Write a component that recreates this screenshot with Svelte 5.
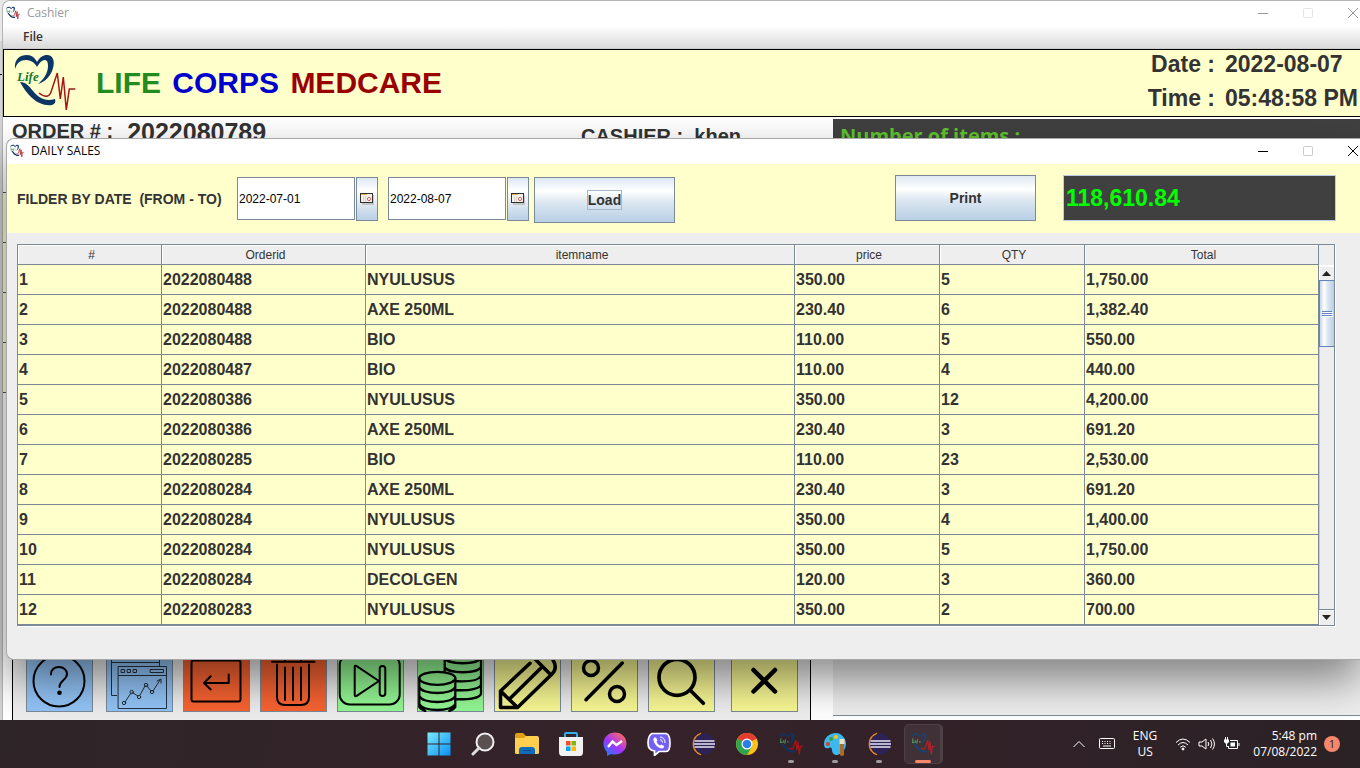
<script>
  const columns = [
    { name: '#', width: 144 },
    { name: 'Orderid', width: 204 },
    { name: 'itemname', width: 429 },
    { name: 'price', width: 145 },
    { name: 'QTY', width: 145 },
    { name: 'Total', width: 234 }
  ];

  const rows = [
    ['1', '2022080488', 'NYULUSUS', '350.00', '5', '1,750.00'],
    ['2', '2022080488', 'AXE 250ML', '230.40', '6', '1,382.40'],
    ['3', '2022080488', 'BIO', '110.00', '5', '550.00'],
    ['4', '2022080487', 'BIO', '110.00', '4', '440.00'],
    ['5', '2022080386', 'NYULUSUS', '350.00', '12', '4,200.00'],
    ['6', '2022080386', 'AXE 250ML', '230.40', '3', '691.20'],
    ['7', '2022080285', 'BIO', '110.00', '23', '2,530.00'],
    ['8', '2022080284', 'AXE 250ML', '230.40', '3', '691.20'],
    ['9', '2022080284', 'NYULUSUS', '350.00', '4', '1,400.00'],
    ['10', '2022080284', 'NYULUSUS', '350.00', '5', '1,750.00'],
    ['11', '2022080284', 'DECOLGEN', '120.00', '3', '360.00'],
    ['12', '2022080283', 'NYULUSUS', '350.00', '2', '700.00']
  ];

  let from = $state('2022-07-01');
  let to = $state('2022-08-07');
</script>

{#snippet logo(size, lettering)}
  <svg class="logo" width={size} height={size} viewBox="0 0 62 60" aria-hidden="true">
    <path fill="#0b3564" d="M1 16C0 6 6 2 13 2c5 0 8 3 10 7 3-5 6-7 10-7 6 0 8 6 6 13-2 8-8 14-15 16 6-5 10-11 10-18 0-4-1-6-3-6-4 0-6 4-8 7-2-4-6-7-11-7-6 0-9 3-11 9z" />
    <path fill="#0b3564" d="M6 29c6 0 9 4 13 9 6 7 12 11 22 8 1 3 0 5-3 6-7 1-15-2-21-8-4-4-7-8-11-15z" />
    <path fill="none" stroke="#a8141b" stroke-width={lettering ? 1.5 : 3} d="M25 40c5 4 10 5 12-1l6.300-19 3 26 3-22 3 33 3-21h6" />
    {#if lettering}
      <text x="3" y="28" font-family="Liberation Serif, serif" font-style="italic" font-weight="bold" font-size="13" fill="#147a35">Life</text>
    {:else}
      <path fill="none" stroke="#3f8a55" stroke-width="3" d="M5 15l-1 11 6-1M12 20v7M17 18l-2 11M21 24l4 1" />
    {/if}
  </svg>
{/snippet}

{#snippet caption(title)}
  <header class="caption">
    {@render logo(14, false)}
    <span class="caption-title">{title}</span>
    <span class="caption-controls">
      <button aria-label="Minimize"><svg width="12" height="12"><path d="M1 6.500h10" /></svg></button>
      <button aria-label="Maximize" disabled><svg width="12" height="12"><rect x="1.500" y="1.500" width="9" height="9" rx="1" /></svg></button>
      <button aria-label="Close"><svg width="12" height="12"><path d="M1 1l10 10M11 1L1 11" /></svg></button>
    </span>
  </header>
{/snippet}

{#snippet calendar()}
  <svg width="14" height="12" viewBox="0 0 14 12" aria-hidden="true">
    <rect x="2" y="2" width="12" height="10" fill="#a9a08f" opacity=".5" />
    <rect x=".5" y=".5" width="12" height="9" fill="#f4f1ec" stroke="#33312d" />
    <path d="M1 1.500h6" stroke="#e0b25c" />
    <path d="M3.500 3v6M5.500 3v6" stroke="#d9d5d0" />
    <circle cx="9" cy="6" r="1.600" fill="#fff" stroke="#e0605a" />
  </svg>
{/snippet}

{#snippet eclipse()}
  <svg width="24" height="24" viewBox="0 0 24 24" aria-hidden="true">
    <path d="M10 1.500A11 11 0 0 0 10 22.500 12 12 0 0 1 10 1.500z" fill="#f7941e" stroke="#f7941e" stroke-width="1.500" />
    <circle cx="13.300" cy="12" r="10.500" fill="#2c2255" />
    <path d="M3.500 9h20M3 12h21M3.500 15h20" stroke="#e9e6f5" stroke-width="1.700" />
  </svg>
{/snippet}

<div class="screen">
  <main class="desktop">
    <section class="window cashier">
      {@render caption('Cashier')}
      <nav class="menubar"><button>File</button></nav>

      <div class="banner">
        {@render logo(62, true)}
        <h1><span class="life">LIFE</span> <span class="corps">CORPS</span> <span class="medcare">MEDCARE</span></h1>
        <dl class="clock">
          <dt>Date :</dt><dd>2022-08-07</dd>
          <dt>Time :</dt><dd>05:48:58 PM</dd>
        </dl>
      </div>

      <div class="work">
        <div class="cart-edge"></div>
        <div class="sale">
          <div class="order">
            <span>ORDER # :</span>
            <span class="order-no">2022080789</span>
            <span class="cashier-name">CASHIER :&nbsp; khen</span>
          </div>
          <div class="tools">
            <button class="tool blue" aria-label="Help">
              <svg viewBox="0 0 67 62" stroke-width="2"><circle cx="33" cy="31" r="25.500" /><path d="M25 24.500c0-5 3.500-7.500 8-7.500s8 3 8 7c0 6-7.500 6-7.500 13" /><circle cx="33.500" cy="42.700" r="1.300" fill="#000" /></svg>
            </button>
            <div class="group">
              <button class="tool blue" aria-label="Reports">
                <svg viewBox="0 0 67 62" stroke="#23323f" stroke-width="1"><path d="M10.700 45.500H5.500V3.500h48v12M5.500 12.500h48M37 9.500h13M9 6.500h3v3H9zM15 6.500h3v3h-3z" /><path d="M12.500 16.500h48v42h-48zM12.500 25.500h48M15.500 19.500h3v3h-3zM21.500 19.500h3v3h-3zM27.500 19.500h3v3h-3zM44.500 19.500h13v3h-13z" /><path d="M19 52l6-9M27 43l5 3M34 45l5-9M41 36l4 5M47 41l7-11M51 31l4-2v4" /><circle cx="18" cy="53" r="1.700" /><circle cx="25.700" cy="42" r="1.700" /><circle cx="33" cy="47" r="1.700" /><circle cx="40" cy="35" r="1.700" /><circle cx="46" cy="42" r="1.700" /></svg>
              </button>
              <button class="tool red" aria-label="Enter">
                <svg viewBox="0 0 67 62" stroke-width="2"><rect x="8.500" y="10.500" width="49" height="41" rx="2" /><path d="M45.700 24.500V33H21M27.700 26.300L21 33l6.700 6.500" /></svg>
              </button>
              <button class="tool red" aria-label="Delete">
                <svg viewBox="0 0 67 62" stroke-width="2"><path d="M12 11.700h42.500M25 11V6h16v5M17 14.500V47q0 8 8 8h16q8 0 8-8V14.500M25 17.500V50M33 17.500V50M41 17.500V50" /></svg>
              </button>
              <button class="tool green" aria-label="Next">
                <svg viewBox="0 0 67 62" stroke-width="2"><rect x="2.700" y="5" width="60" height="49.500" rx="10" /><path d="M17.700 17q0-2 2-.8L42 31 19.700 45.800q-2 1-2-.8z" /><rect x="42.700" y="16" width="5.600" height="30" rx="2.800" /></svg>
              </button>
            </div>
            <div class="group">
              <button class="tool green" aria-label="Cash">
                <svg viewBox="0 0 67 62" stroke-width="2.300"><ellipse cx="20.300" cy="28.300" rx="18" ry="6.500" /><path d="M2.300 28.300V57q2 3 6 4M38.300 28.300V57q-2 3-6 4M2.300 37c3 8 33 8 36 0M2.300 46c3 8 33 8 36 0M2.300 54c3 8 33 8 36 0M27.700 21V4M64 4v40c-2 4-12 6-25.700 5M27.700 8c3 7 33 7 36.300 0M27.700 17c3 7 33 7 36.300 0M36 31c13 1 25 0 28-5M39 40c12 1 23-1 25-5" /></svg>
              </button>
              <button class="tool yellow" aria-label="Edit">
                <svg viewBox="0 0 67 62" stroke-width="3.500"><path d="M36 13.300L6.500 41v16.500h17L58 24q6-6 1-14M6.500 41l17 16.500M16 48.500L48 17M41 9l16 16" /></svg>
              </button>
              <button class="tool yellow" aria-label="Discount">
                <svg viewBox="0 0 67 62" stroke-width="3.500"><circle cx="20" cy="18" r="7.500" /><circle cx="46" cy="44" r="7.500" /><path d="M15 49.700L51.300 13" /></svg>
              </button>
              <button class="tool yellow" aria-label="Search">
                <svg viewBox="0 0 67 62" stroke-width="3.700"><circle cx="29" cy="27.300" r="18" /><path d="M42 40l13.300 13.300" /></svg>
              </button>
            </div>
            <button class="tool yellow cancel" aria-label="Cancel">
              <svg viewBox="0 0 67 62" stroke-width="4.500"><path d="M22.500 20L44 41.500M44 20L22.500 41.500" /></svg>
            </button>
          </div>
        </div>
        <div class="items">
          <div class="items-head">Number of items :</div>
        </div>
      </div>
    </section>

    <section class="window sales">
      {@render caption('DAILY SALES')}
      <form class="filter" onsubmit={(e) => e.preventDefault()}>
        <label for="from">FILDER BY DATE &nbsp;(FROM - TO)</label>
        <span class="date"><input id="from" bind:value={from} /><button type="button" aria-label="Choose start date">{@render calendar()}</button></span>
        <span class="date"><input aria-label="To" bind:value={to} /><button type="button" aria-label="Choose end date">{@render calendar()}</button></span>
        <button class="action load"><span>Load</span></button>
        <button class="action print" type="button">Print</button>
        <output>118,610.84</output>
      </form>

      <div class="grid">
        <table>
          <colgroup>{#each columns as c}<col style:width="{c.width}px" />{/each}</colgroup>
          <thead><tr>{#each columns as c}<th>{c.name}</th>{/each}</tr></thead>
          <tbody>
            {#each rows as row}
              <tr>{#each row as cell}<td>{cell}</td>{/each}</tr>
            {/each}
          </tbody>
        </table>
        <div class="scroll">
          <div class="corner"></div>
          <button aria-label="Scroll up"><svg width="9" height="5"><path fill="#222" d="M0 5l4.500-5L9 5z" /></svg></button>
          <div class="thumb"><i></i><i></i><i></i></div>
          <div class="track"></div>
          <button class="down" aria-label="Scroll down"><svg width="9" height="5"><path fill="#222" d="M0 0l4.500 5L9 0z" /></svg></button>
        </div>
      </div>
    </section>
  </main>

  <footer class="taskbar">
    <div class="apps">
      <button aria-label="Start">
        <svg width="24" height="24"><defs><linearGradient id="win" x1="0" y1="0" x2="1" y2="1"><stop offset="0" stop-color="#7beaff" /><stop offset="1" stop-color="#0a90f5" /></linearGradient></defs><path fill="url(#win)" d="M.5.500h11v11H.5zM12.500.5h11v11h-11zM.5 12.500h11v11H.5zM12.500 12.500h11v11h-11z" /></svg>
      </button>
      <button aria-label="Search">
        <svg width="24" height="24" fill="none"><circle cx="14" cy="10" r="8.500" fill="#5a5052" stroke="#eee" stroke-width="2" /><path d="M8 16l-6 6" stroke="#ddd" stroke-width="3" stroke-linecap="round" /></svg>
      </button>
      <button aria-label="File Explorer">
        <svg width="26" height="24"><path d="M1 3q0-2 2-2h6l3 3v5H1z" fill="#e2a010" /><path d="M1 6h9l2-2h11q2 0 2 2v15q0 1-2 1H3q-2 0-2-1z" fill="#ffd04f" /><path d="M5 22v-4q0-3 3-3h10q3 0 3 3v4z" fill="#0f6cbd" /><path d="M9 18.500h8" stroke="#0b4f91" /></svg>
      </button>
      <button aria-label="Store">
        <svg width="24" height="24"><path d="M6 6V2q0-1 1-1h10q1 0 1 1v4" fill="none" stroke="#2fb0ec" stroke-width="2" /><path d="M0 5h24v15q0 4-3 4H3q-3 0-3-4z" fill="#f1f1f1" /><path d="M7 9h4.500v4.500H7z" fill="#f25022" /><path d="M12.500 9H17v4.500h-4.500z" fill="#7fba00" /><path d="M7 14.500h4.500V19H7z" fill="#00a4ef" /><path d="M12.500 14.500H17V19h-4.500z" fill="#ffb900" /></svg>
      </button>
      <button aria-label="Messenger">
        <svg width="24" height="24"><defs><linearGradient id="msg" x1="0" y1="1" x2=".8" y2="0"><stop offset="0" stop-color="#0a8cff" /><stop offset=".5" stop-color="#a033ff" /><stop offset="1" stop-color="#ff6a5c" /></linearGradient></defs><path fill="url(#msg)" d="M12 .5c6.500 0 11.500 4.700 11.500 11S18.500 22.500 12 22.500q-2 0-4-.6L4 24v-4C1.800 18 .5 15 .5 11.500.5 5.200 5.500.5 12 .5z" /><path d="M5 15l4.500-5.500 4 3.500L19 9" fill="none" stroke="#fff" stroke-width="2.500" /></svg>
      </button>
      <button aria-label="Viber">
        <svg width="24" height="24"><path d="M5 1.500h14q4 1 4 9.500t-4 8.500h-7l-4.500 4v-4.500Q1 18.500 1 11t4-9.500z" fill="#7360f2" stroke="#fff" stroke-width="1.700" /><path d="M7.500 5.500Q6 6 6.500 8.500c1 4 4 7 8 8 2 .3 3-2 2.500-2.500l-2.500-1.500-1.500 1q-3-1.500-3.500-4l1-1L9 5.500z" fill="#fff" /><path d="M13 5q5 .5 5 6M13 7.500q2.500.5 2.500 3" fill="none" stroke="#fff" /></svg>
      </button>
      <button aria-label="Eclipse">{@render eclipse()}</button>
      <button aria-label="Chrome">
        <svg width="24" height="24"><circle cx="12" cy="12" r="11" fill="#fbc116" /><path d="M12 12L2.500 6.500a11 11 0 0 1 19 0z" fill="#e33b2e" /><path d="M12 12L2.500 6.500A11 11 0 0 0 12 23l5-8.500z" fill="#2da44e" /><circle cx="12" cy="12" r="5.500" fill="#fff" /><circle cx="12" cy="12" r="4.300" fill="#2b7de9" /></svg>
      </button>
      <button class="running" aria-label="Life Corps">{@render logo(24, false)}</button>
      <button class="running" aria-label="Paint">
        <svg width="24" height="24"><path d="M13 1C6 1 1 6 1 12c0 4 2 5 5 4 2-1 3 0 3 2 0 3 2 5 5 5 5-1 9-6 9-11S19 1 13 1z" fill="#3cb8ee" /><circle cx="5" cy="12" r="2" fill="#d9411e" /><circle cx="8" cy="7" r="2" fill="#3ba12f" /><circle cx="13" cy="5" r="2" fill="#f7c325" /><path d="M17 12h4v11q-2 2-4 0z" fill="#b5691e" /><path d="M16.500 7h5v5h-5z" fill="#f3dfb8" /></svg>
      </button>
      <button class="running" aria-label="Eclipse workspace">{@render eclipse()}</button>
      <button class="running active" aria-label="Daily sales">{@render logo(24, false)}</button>
    </div>
    <div class="tray">
      <button aria-label="Hidden icons"><svg width="14" height="14"><path d="M1.500 10L7 4.500 12.500 10" /></svg></button>
      <button aria-label="Keyboard"><svg width="16" height="14"><rect x=".5" y="1.500" width="15" height="10" rx="1" /><path d="M3 4.500h10M3 6.500h10" stroke-dasharray="1 1.500" /><path d="M4 9h8" /></svg></button>
      <button class="lang">ENG<br />US</button>
      <button class="status" aria-label="Network, volume and battery">
        <svg width="16" height="14"><path d="M1 5.500q7-7 14 0M3 8q5-5 10 0M5.200 10.200q2.800-2.800 5.600 0" /><circle cx="8" cy="12" r="1" fill="#fff" /></svg>
        <svg width="18" height="14"><path d="M1 5h3l4-3v10L4 9H1zM10 5q1.500 2 0 4M12.500 3q3 4 0 8M14.500 1.500q4 5.500 0 11" /></svg>
        <svg width="17" height="14"><path d="M7 3.500h7.500v8h-9V9M16 6v3M2.500 0v3M4.500 0v3M3.500 6v3.500h2" /><path d="M1 2.500h5V5L4.500 6.500h-2L1 5zM7.500 5.500H12v4H7.500z" fill="#fff" stroke="none" /></svg>
      </button>
      <button class="time">5:48 pm<br />07/08/2022</button>
      <button class="badge" aria-label="1 notification">1</button>
    </div>
  </footer>
</div>

<style>
  :global(body) {
    margin: 0;
    overflow: hidden;
  }

  .screen {
    display: flex;
    flex-direction: column;
    height: 100vh;
    font-family: 'Liberation Sans', Arial, sans-serif;
    color: #333;
    overflow: hidden;
  }

  button {
    font: inherit;
    color: inherit;
    border: 0;
    padding: 0;
    background: none;
  }

  h1, dl, dd { margin: 0; }
  svg { display: block; flex: none; }

  .desktop {
    position: relative;
    flex: 1;
    min-height: 0;
    overflow: hidden;
    background: linear-gradient(#e8e8e8 0 41px, #d4d4d4 41px 74px, #000 74px 75px, #d4d4d4 75px);
  }

  .window {
    position: absolute;
    right: 0;
    display: flex;
    flex-direction: column;
  }

  .cashier {
    left: 2px;
    top: 0;
    bottom: 0;
    border: 1px solid #b4b4b4;
    border-width: 1px 0 0 1px;
    border-radius: 8px 0 0 0;
    background: #fff;
    overflow: hidden;
  }

  .sales {
    left: 6px;
    top: 138px;
    border: 1px solid #a8a8a8;
    border-right: 0;
    border-radius: 8px 0 0 8px;
    background: #eee;
    box-shadow: 0 20px 44px rgba(0, 0, 0, 0.46);
  }

  .caption {
    box-sizing: border-box;
    display: flex;
    align-items: center;
    height: 25px;
    padding: 0 1px 2px 3px;
    gap: 7px;
    background: #fff;
    border-radius: 8px 0 0 0;
    color: #000;
    font: 12px 'Open Sans', 'Noto Sans', sans-serif;
  }

  .cashier .caption { color: #999; }

  .caption-controls {
    display: flex;
    gap: 33px;
    margin-left: auto;
  }

  .caption-controls svg {
    fill: none;
    stroke: currentColor;
  }

  .caption-controls button:disabled { color: #ccc; }
  .cashier .caption-controls button:disabled { color: #e6e6e6; }

  .menubar {
    height: 22px;
    padding-left: 20px;
    background: linear-gradient(#fff, #dadada);
    border-bottom: 1px solid #ccc;
    font: 600 12px/22px 'Open Sans', sans-serif;
  }

  .banner {
    display: flex;
    align-items: center;
    height: 66px;
    padding-left: 10px;
    border: 1px solid #000;
    border-right: 0;
    background: #ffffcc;
  }

  h1 {
    margin-left: 20px;
    font-size: 30px;
  }

  h1 span + span { margin-left: 3px; }
  .life { color: #228b22; }
  .corps { color: #0000cd; }
  .medcare { color: #990000; }

  .clock {
    display: grid;
    grid-template-columns: auto 132px;
    gap: 0 10px;
    margin-left: auto;
    padding: 0 3px 4px 0;
    font-size: 23px;
    font-weight: bold;
    line-height: 34px;
    white-space: nowrap;
  }

  .clock dt { text-align: right; }

  .work {
    flex: 1;
    display: grid;
    grid-template-columns: 9px 799fr 22px 527fr;
    background: #fff;
  }

  .cart-edge {
    height: 201px;
    margin-top: 75px;
    background: repeating-linear-gradient(#556 0 1px, #ffffcc 1px 50px);
  }

  .sale {
    display: flex;
    flex-direction: column;
    justify-content: space-between;
  }

  .order {
    display: flex;
    font-size: 20px;
    font-weight: bold;
    line-height: 28px;
  }

  .order-no {
    margin-left: 14px;
    font-size: 25px;
    line-height: 30px;
  }

  .cashier-name {
    margin: 5px 70px 0 auto;
  }

  .tools {
    display: flex;
    gap: 13px;
    padding: 70px 12px 8px 13px;
    border: 1px solid #000;
    border-width: 0 1px;
    background: #eee;
  }

  .group {
    display: flex;
    gap: 10px;
  }

  .tool {
    box-sizing: border-box;
    width: 67px;
    height: 62px;
    border: 1px solid #7a8a99;
  }

  .cancel { margin-left: auto; }

  .tool svg {
    margin: -1px;
    width: 67px;
    height: 62px;
    fill: none;
    stroke-linecap: round;
    stroke-linejoin: round;
  }

  .tool svg:not([stroke]) { stroke: #000; }
  .blue { background: #93c5f8; }
  .red { background: #f96332; }
  .green { background: #94f894; }
  .yellow { background: #f8f894; }

  .items {
    grid-column: 4;
    margin: 2px 0 4px;
    background: #eee;
    border-bottom: 1px solid #7a8a99;
  }

  .items-head {
    height: 40px;
    padding-left: 7px;
    background: #404040;
    color: #5fc32e;
    font: bold 20px/34px 'Open Sans', sans-serif;
  }

  .filter {
    display: flex;
    align-items: center;
    height: 69px;
    padding: 0 24px 0 10px;
    background: #ffffcc;
    font-size: 14px;
    font-weight: bold;
  }

  .filter label {
    flex: none;
    width: 220px;
    white-space: nowrap;
  }

  .date {
    display: flex;
    gap: 1px;
    margin-right: 10px;
  }

  .date input {
    box-sizing: border-box;
    width: 118px;
    height: 43px;
    padding: 2px 1px 0;
    border: 1px solid #7a8a99;
    border-radius: 0;
    background: #fff;
    color: #000;
    font: 12px 'Liberation Sans', Arial, sans-serif;
  }

  .date button {
    display: grid;
    place-items: center;
    width: 22px;
    height: 44px;
    border: 1px solid #7a8a99;
    background: linear-gradient(#dfe9f3, #fff 30%, #b8cfe5);
  }

  .action {
    width: 141px;
    height: 46px;
    border: 1px solid #7a8a99;
    background: linear-gradient(#dfe9f3, #fff 30%, #dce7f1 55%, #b8cfe5);
  }

  .load {
    margin: 2px 0 0 -5px;
  }

  .load span {
    padding: 1px 0;
    border: 1px solid #a3b8cc;
  }

  .print {
    margin: 0 27px 2px auto;
  }

  output {
    box-sizing: border-box;
    width: 273px;
    height: 46px;
    margin-bottom: 2px;
    padding-left: 2px;
    border: 1px solid #b8cfe5;
    background: #404040;
    color: #0f0;
    font-size: 23px;
    line-height: 44px;
  }

  .grid {
    display: flex;
    margin: 11px 25px 33px 10px;
    border: 1px solid #7a8a99;
    box-shadow: 1px 1px #fff;
  }

  table {
    flex: 1;
    min-width: 0;
    width: 100%;
    table-layout: fixed;
    border-collapse: separate;
    border-spacing: 0;
  }

  th, td {
    box-sizing: border-box;
    padding: 0 1px;
    border: 1px solid #7a8a99;
    border-width: 0 1px 1px 0;
    white-space: nowrap;
  }

  th {
    height: 20px;
    padding: 2px 0 0 4px;
    background: #eee;
    box-shadow: inset 1px 1px #fff;
    font-size: 12px;
    font-weight: normal;
    line-height: 17px;
  }

  td {
    height: 30px;
    background: #ffffcc;
    font-size: 16px;
    font-weight: bold;
    line-height: 29px;
  }

  .scroll {
    display: flex;
    flex-direction: column;
    flex: none;
    width: 15px;
  }

  .corner {
    height: 20px;
    border-bottom: 1px solid #fff;
  }

  .scroll button {
    display: grid;
    place-items: center;
    height: 14px;
    background: #eee;
    box-shadow: inset 1px 1px #fff;
  }

  .scroll .down {
    height: 16px;
    border-top: 1px solid #7a8a99;
  }

  .thumb {
    box-sizing: border-box;
    display: flex;
    flex-direction: column;
    justify-content: center;
    gap: 1px;
    height: 67px;
    padding: 0 2px;
    border: 1px solid #6382bf;
    border-right: 0;
    background: linear-gradient(90deg, #c4d6ea, #fff 30%, #dce7f1 55%, #b8cfe5);
  }

  .thumb i {
    height: 1px;
    background: #6382bf;
    box-shadow: 1px 1px #fff;
  }

  .track {
    flex: 1;
    border-left: 1px solid #b8cfe5;
  }

  .taskbar {
    display: grid;
    grid-template-columns: 1fr auto 1fr;
    height: 48px;
    background: linear-gradient(100deg, #2e2528, #36222a 50%, #2b2226);
    color: #fff;
  }

  .apps {
    grid-column: 2;
    display: flex;
    padding-left: 1px;
  }

  .apps button {
    position: relative;
    display: grid;
    place-items: center;
    width: 44px;
  }

  .running::after {
    content: '';
    position: absolute;
    bottom: 5px;
    width: 6px;
    height: 3px;
    border-radius: 2px;
    background: #a09a9c;
  }

  .active::before {
    content: '';
    position: absolute;
    inset: 4px 2px 4px 3px;
    border: 1px solid #4d4145;
    border-width: 1px 3px 1px 1px;
    border-radius: 5px;
    background: rgba(255, 255, 255, 0.07);
  }

  .active::after {
    width: 16px;
    background: #f8866a;
  }

  .tray {
    display: flex;
    align-items: center;
    justify-content: flex-end;
    padding-right: 20px;
    font: 12px/16px 'Open Sans', sans-serif;
  }

  .tray svg {
    fill: none;
    stroke: #fff;
  }

  .tray button + button { margin-left: 13px; }
  .tray button.lang { margin: 0 5px 0 18px; }

  .status {
    display: flex;
    gap: 7px;
  }

  .tray .time { text-align: right; }

  .tray button.badge {
    width: 16px;
    height: 16px;
    margin-left: 7px;
    border-radius: 50%;
    background: #f8866a;
    color: #222;
    text-align: center;
    font-size: 11px;
    line-height: 16px;
  }
</style>
